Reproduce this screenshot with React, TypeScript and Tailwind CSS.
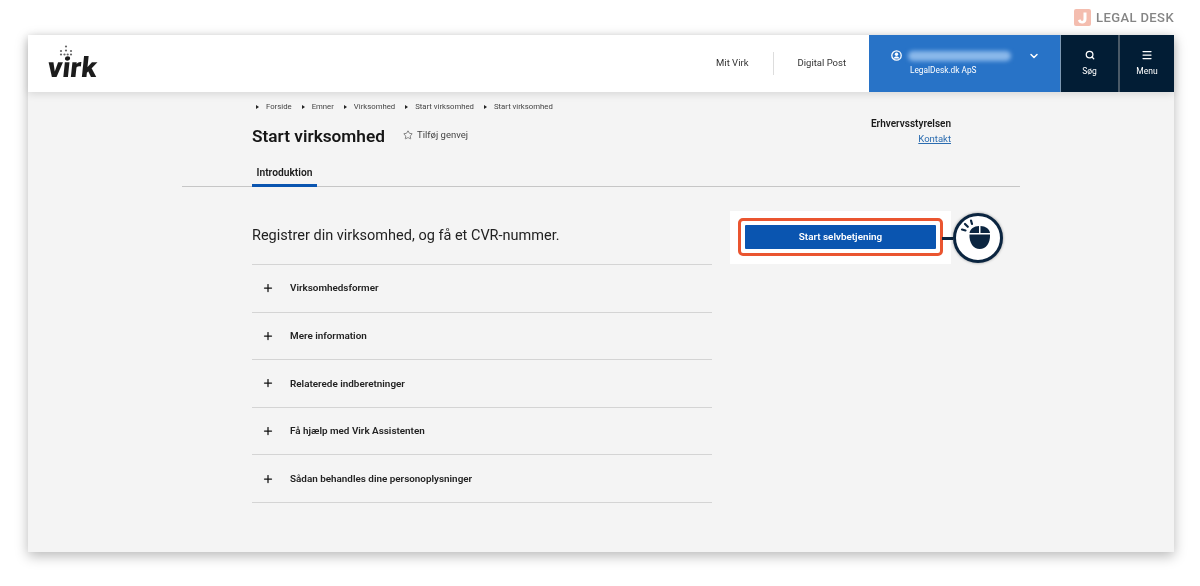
import { ChevronDown, Menu, Search, Star, Plus } from "lucide-react";

const crumbs = ["Forside", "Emner", "Virksomhed", "Start virksomhed", "Start virksomhed"];
const rows = [
  "Virksomhedsformer",
  "Mere information",
  "Relaterede indberetninger",
  "Få hjælp med Virk Assistenten",
  "Sådan behandles dine personoplysninger",
];

function Crown() {
  return (
    <svg width="14" height="12" viewBox="0 0 14 12" className="ml-[11px] block" fill="#666">
      <circle cx="7" cy="1.500" r="1.100" />
      <circle cx="7" cy="5.500" r="1.100" />
      <circle cx="2" cy="6" r="1.100" />
      <circle cx="12" cy="6" r="1.100" />
      <circle cx="2" cy="9.500" r="1.100" />
      <circle cx="5.500" cy="9.500" r="1.100" />
      <circle cx="8.700" cy="9.500" r="1.100" />
      <circle cx="12" cy="9.500" r="1.100" />
    </svg>
  );
}

function UserIcon() {
  return (
    <svg width="11" height="11" viewBox="0 0 11 11" className="absolute left-[22px] top-[15px]">
      <circle cx="5.500" cy="5.500" r="4.700" fill="none" stroke="#fff" strokeWidth="1.300" />
      <circle cx="5.500" cy="4.300" r="1.700" fill="#fff" />
      <path d="M2.500 8.500c.6-1.500 1.700-2 3-2s2.400.5 3 2z" fill="#fff" />
    </svg>
  );
}

function MouseBadge() {
  return (
    <div className="absolute left-[212px] top-[2px] flex items-center">
      <div className="h-[3px] w-[11px] bg-[#0b2540]" />
      <div className="flex h-[50px] w-[50px] items-center justify-center rounded-full border-[3px] border-[#0b2540] bg-white shadow-[0_0_3px_rgba(0,0,0,0.4)]">
        <svg width="44" height="44" viewBox="0 0 44 44">
          <path d="M23 10C18 10 14 13 13.500 17H23Z" fill="#0b2540" />
          <path d="M24.500 10C29.500 10 33.500 13 34 17H24.500Z" fill="#0b2540" />
          <path d="M13.500 18.500H34C34.500 27 30 33 23.700 33C17.500 33 13 27 13.500 18.500Z" fill="#0b2540" />
          <path d="M6 13.500l3.500 1M9 8l2.800 2.800M15 4.500l1 3.500" stroke="#0b2540" strokeWidth="2.200" strokeLinecap="round" />
        </svg>
      </div>
    </div>
  );
}

export default function App() {
  return (
    <div className="h-[586px] w-[1200px] overflow-hidden bg-white font-['Roboto',sans-serif] text-[#1a1a1a] [filter:blur(0.4px)]">
      <div className="flex h-[35px] items-center justify-end gap-[5px] pr-[26px]">
        <div className="flex h-[17px] w-[17px] items-center justify-center rounded-[2px] bg-[#f4bdaf]">
          <svg width="11" height="12" viewBox="0 0 11 12" fill="#fff">
            <path d="M6.500 0.500h3V7c0 2.800-1.700 4.500-4.300 4.500C3 11.500 1.500 10.300 1 8.200l2.500-1c.3 1 .8 1.700 1.600 1.700.9 0 1.400-.7 1.400-1.900z" />
          </svg>
        </div>
        <span className="text-[13px] font-medium tracking-[0.4px] text-[#858585]">LEGAL DESK</span>
      </div>

      <div className="mx-[28px] flex h-[517px] w-[1146px] flex-col bg-[#f4f4f4] shadow-[0_4px_12px_rgba(0,0,0,0.28)]">
        <header className="flex h-[57px] shrink-0 items-stretch bg-white shadow-[0_2px_8px_rgba(0,0,0,0.12)]">
          <div className="flex flex-col pl-[20px] pt-[10px]">
            <Crown />
            <span className="-skew-x-6 text-[28px] font-black leading-[22px] tracking-[0.2px] text-[#1c1c1c]">virk</span>
          </div>
          <div className="ml-auto flex items-center text-[9.500px] text-[#333]">
            <span className="pr-[24px]">Mit Virk</span>
            <div className="h-[23px] w-px bg-[#ddd]" />
            <span className="pl-[24px] pr-[23px]">Digital Post</span>
          </div>
          <div className="relative w-[191px] bg-[#2873c7] text-white">
            <UserIcon />
            <div className="absolute left-[39px] top-[16px] h-[10px] w-[103px] rounded-full bg-[#8ab8ea] blur-[2px]" />
            <ChevronDown size={12} strokeWidth={3} className="absolute left-[159px] top-[15px]" />
            <div className="pl-[41px] pt-[29px] text-[8.300px] leading-[13px]">LegalDesk.dk ApS</div>
          </div>
          <div className="flex w-[58px] flex-col items-center border-l border-[#7c98b3] bg-[#021d35] pt-[15px] text-white">
            <Search size={10} strokeWidth={3} />
            <span className="mt-[6px] text-[8.500px] leading-[11px]">Søg</span>
          </div>
          <div className="flex w-[56px] flex-col items-center border-l-2 border-[#4a5a68] bg-[#021d35] pt-[14px] text-white">
            <Menu size={12} strokeWidth={2.5} />
            <span className="mt-[5px] text-[8.500px] leading-[11px]">Menu</span>
          </div>
        </header>

        <main className="flex flex-1 flex-col pl-[154px] pr-[154px]">
          <div className="pl-[70px] pr-[69px]">
            <div className="flex h-[27px] items-center pl-[4px] pt-[2px] text-[7.750px] text-[#444]">
              {crumbs.map((c, i) => (
                <span key={i} className="mr-[10px] flex items-center gap-[7px]">
                  <span className="inline-block h-0 w-0 border-y-[2.500px] border-l-[3px] border-y-transparent border-l-[#222]" />
                  {c}
                </span>
              ))}
            </div>
            <div className="flex items-start justify-between">
              <div className="flex items-center">
                <h1 className="mt-[2px] text-[17.250px] font-semibold leading-[30px] text-[#161616]">Start virksomhed</h1>
                <span className="ml-[18px] flex items-center gap-[4px] text-[9.500px] text-[#444]">
                  <Star size={10} strokeWidth={1.5} />
                  Tilføj genvej
                </span>
              </div>
              <div className="mt-[-3px] flex flex-col items-end leading-[15px]">
                <span className="text-[10px] font-semibold">Erhvervsstyrelsen</span>
                <span className="text-[9.500px] text-[#2b6cb0] underline">Kontakt</span>
              </div>
            </div>
          </div>

          <div className="mt-[9px] flex h-[27px] items-stretch border-b border-[#c6c6c6] pl-[70px]">
            <div className="mb-[-1px] flex w-[65px] items-center justify-center border-b-[3px] border-[#0a55b0] pt-[2px] text-[10.250px] font-semibold">
              Introduktion
            </div>
          </div>

          <div className="flex pl-[70px]">
            <div className="w-[460px]">
              <p className="flex h-[77px] items-center pt-[21px] text-[14.500px] text-[#222]">
                Registrer din virksomhed, og få et CVR-nummer.
              </p>
              <ul className="border-t border-[#d4d4d4]">
                {rows.map((r) => (
                  <li key={r} className="flex h-[47.600px] items-center border-b border-[#d4d4d4] pl-[10px]">
                    <Plus size={12} strokeWidth={2.500} className="text-[#111]" />
                    <span className="mt-[1px] ml-[16px] text-[9.900px] font-semibold text-[#222]">{r}</span>
                  </li>
                ))}
              </ul>
            </div>
            <div className="relative ml-[18px] mt-[24px] h-[53px] w-[221px] bg-white">
              <div className="mx-[8px] mt-[7px] flex h-[38px] items-center justify-center rounded-[5px] border-[3px] border-[#ea5530] px-[4px]">
                <div className="flex h-[24px] w-full items-center justify-center rounded-[1px] bg-[#0a55b0] text-[9.900px] font-semibold text-white">
                  Start selvbetjening
                </div>
              </div>
              <MouseBadge />
            </div>
          </div>
        </main>
      </div>
    </div>
  );
}
